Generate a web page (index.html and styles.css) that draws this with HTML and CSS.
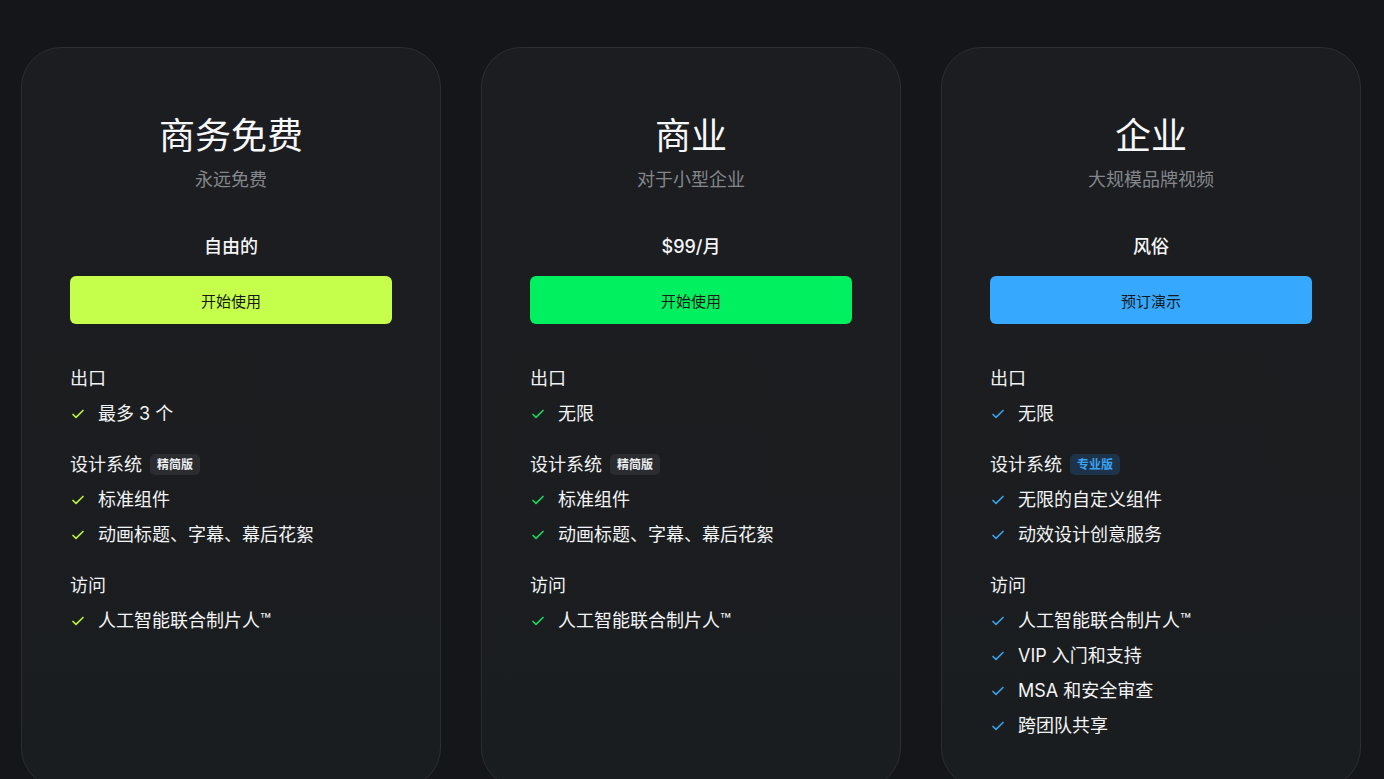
FILE: index.html
```html
<!DOCTYPE html>
<html lang="zh-CN">
<head>
<meta charset="utf-8">
<title>定价</title>
<link rel="stylesheet" href="styles.css">
</head>
<body>
<main class="plans">
  <section class="card">
    <h2 class="card-title">商务免费</h2>
    <p class="card-sub">永远免费</p>
    <p class="price">自由的</p>
    <a class="btn btn-lime">开始使用</a>
    <div class="features check-lime">
      <div class="group">
        <h3 class="group-title">出口</h3>
        <ul class="list">
          <li><svg class="ck" viewBox="0 0 16 16"><path d="M3 8.5l3 2.8 7-6.8"/></svg><span>最多 3 个</span></li>
        </ul>
      </div>
      <div class="group">
        <h3 class="group-title">设计系统 <span class="badge">精简版</span></h3>
        <ul class="list">
          <li><svg class="ck" viewBox="0 0 16 16"><path d="M3 8.5l3 2.8 7-6.8"/></svg><span>标准组件</span></li>
          <li><svg class="ck" viewBox="0 0 16 16"><path d="M3 8.5l3 2.8 7-6.8"/></svg><span>动画标题、字幕、幕后花絮</span></li>
        </ul>
      </div>
      <div class="group">
        <h3 class="group-title">访问</h3>
        <ul class="list">
          <li><svg class="ck" viewBox="0 0 16 16"><path d="M3 8.5l3 2.8 7-6.8"/></svg><span>人工智能联合制片人™</span></li>
        </ul>
      </div>
    </div>
  </section>

  <section class="card">
    <h2 class="card-title">商业</h2>
    <p class="card-sub">对于小型企业</p>
    <p class="price">$99/月</p>
    <a class="btn btn-green">开始使用</a>
    <div class="features check-green">
      <div class="group">
        <h3 class="group-title">出口</h3>
        <ul class="list">
          <li><svg class="ck" viewBox="0 0 16 16"><path d="M3 8.5l3 2.8 7-6.8"/></svg><span>无限</span></li>
        </ul>
      </div>
      <div class="group">
        <h3 class="group-title">设计系统 <span class="badge">精简版</span></h3>
        <ul class="list">
          <li><svg class="ck" viewBox="0 0 16 16"><path d="M3 8.5l3 2.8 7-6.8"/></svg><span>标准组件</span></li>
          <li><svg class="ck" viewBox="0 0 16 16"><path d="M3 8.5l3 2.8 7-6.8"/></svg><span>动画标题、字幕、幕后花絮</span></li>
        </ul>
      </div>
      <div class="group">
        <h3 class="group-title">访问</h3>
        <ul class="list">
          <li><svg class="ck" viewBox="0 0 16 16"><path d="M3 8.5l3 2.8 7-6.8"/></svg><span>人工智能联合制片人™</span></li>
        </ul>
      </div>
    </div>
  </section>

  <section class="card">
    <h2 class="card-title">企业</h2>
    <p class="card-sub">大规模品牌视频</p>
    <p class="price">风俗</p>
    <a class="btn btn-blue">预订演示</a>
    <div class="features check-blue">
      <div class="group">
        <h3 class="group-title">出口</h3>
        <ul class="list">
          <li><svg class="ck" viewBox="0 0 16 16"><path d="M3 8.5l3 2.8 7-6.8"/></svg><span>无限</span></li>
        </ul>
      </div>
      <div class="group">
        <h3 class="group-title">设计系统 <span class="badge badge-pro">专业版</span></h3>
        <ul class="list">
          <li><svg class="ck" viewBox="0 0 16 16"><path d="M3 8.5l3 2.8 7-6.8"/></svg><span>无限的自定义组件</span></li>
          <li><svg class="ck" viewBox="0 0 16 16"><path d="M3 8.5l3 2.8 7-6.8"/></svg><span>动效设计创意服务</span></li>
        </ul>
      </div>
      <div class="group">
        <h3 class="group-title">访问</h3>
        <ul class="list">
          <li><svg class="ck" viewBox="0 0 16 16"><path d="M3 8.5l3 2.8 7-6.8"/></svg><span>人工智能联合制片人™</span></li>
          <li><svg class="ck" viewBox="0 0 16 16"><path d="M3 8.5l3 2.8 7-6.8"/></svg><span>VIP 入门和支持</span></li>
          <li><svg class="ck" viewBox="0 0 16 16"><path d="M3 8.5l3 2.8 7-6.8"/></svg><span>MSA 和安全审查</span></li>
          <li><svg class="ck" viewBox="0 0 16 16"><path d="M3 8.5l3 2.8 7-6.8"/></svg><span>跨团队共享</span></li>
        </ul>
      </div>
    </div>
  </section>
</main>
</body>
</html>
```

FILE: styles.css
```css
* { box-sizing: border-box; }

html, body {
  margin: 0;
  padding: 0;
  background: #151619;
  overflow: hidden;
}

body {
  font-family: "Inter", "Noto Sans CJK SC", sans-serif;
  color: #f2f3f4;
  height: 779px;
}

.plans {
  display: flex;
  gap: 40px;
  padding: 47px 0 0 21px;
  align-items: stretch;
}

.card {
  width: 420px;
  flex: 0 0 420px;
  background: linear-gradient(180deg, #1c1d20 0%, #1a1d1f 100%);
  border: 1px solid #2b2d31;
  border-radius: 40px;
  padding: 67px 48px 48px;
  display: flex;
  flex-direction: column;
}

.card-title {
  margin: 0;
  text-align: center;
  font-size: 36px;
  line-height: 43px;
  font-weight: 400;
  color: #f7f8f9;
}

.card-sub {
  margin: 8px 0 0;
  text-align: center;
  font-size: 18px;
  line-height: 27px;
  color: #83878c;
}

.price {
  margin: 40px 0 0;
  text-align: center;
  font-size: 18px;
  line-height: 27px;
  font-weight: 500;
  color: #f5f6f7;
}

.btn {
  margin-top: 16px;
  height: 48px;
  border-radius: 6px;
  display: flex;
  align-items: center;
  justify-content: center;
  font-size: 15px;
  color: #17191b;
  cursor: pointer;
}

.btn-lime { background: #c5ff4b; }
.btn-green { background: #00f060; }
.btn-blue { background: #36a9ff; }

.features {
  margin-top: 41px;
  display: flex;
  flex-direction: column;
  gap: 24px;
}

.group-title {
  margin: 0;
  font-size: 18px;
  line-height: 27px;
  font-weight: 400;
  color: #f2f3f4;
  display: flex;
  align-items: center;
  gap: 8px;
}

.badge {
  font-size: 12px;
  line-height: 21px;
  height: 21px;
  padding: 0 7px;
  border-radius: 5px;
  background: #2a2c30;
  color: #eceef0;
  font-weight: 700;
}

.badge-pro {
  background: #1d3349;
  color: #3aa2f2;
}

.list {
  list-style: none;
  margin: 8px 0 0;
  padding: 0;
  display: flex;
  flex-direction: column;
  gap: 8px;
}

.list li {
  display: flex;
  align-items: center;
  gap: 12px;
  font-size: 18px;
  line-height: 27px;
  color: #f3f4f5;
}

.ck {
  width: 16px;
  height: 16px;
  flex: 0 0 16px;
  fill: none;
  stroke-width: 1.7;
  stroke-linecap: round;
  stroke-linejoin: round;
}

.check-lime .ck { stroke: #b8f23e; }
.check-green .ck { stroke: #19d65c; }
.check-blue .ck { stroke: #3a9fe8; }
```
